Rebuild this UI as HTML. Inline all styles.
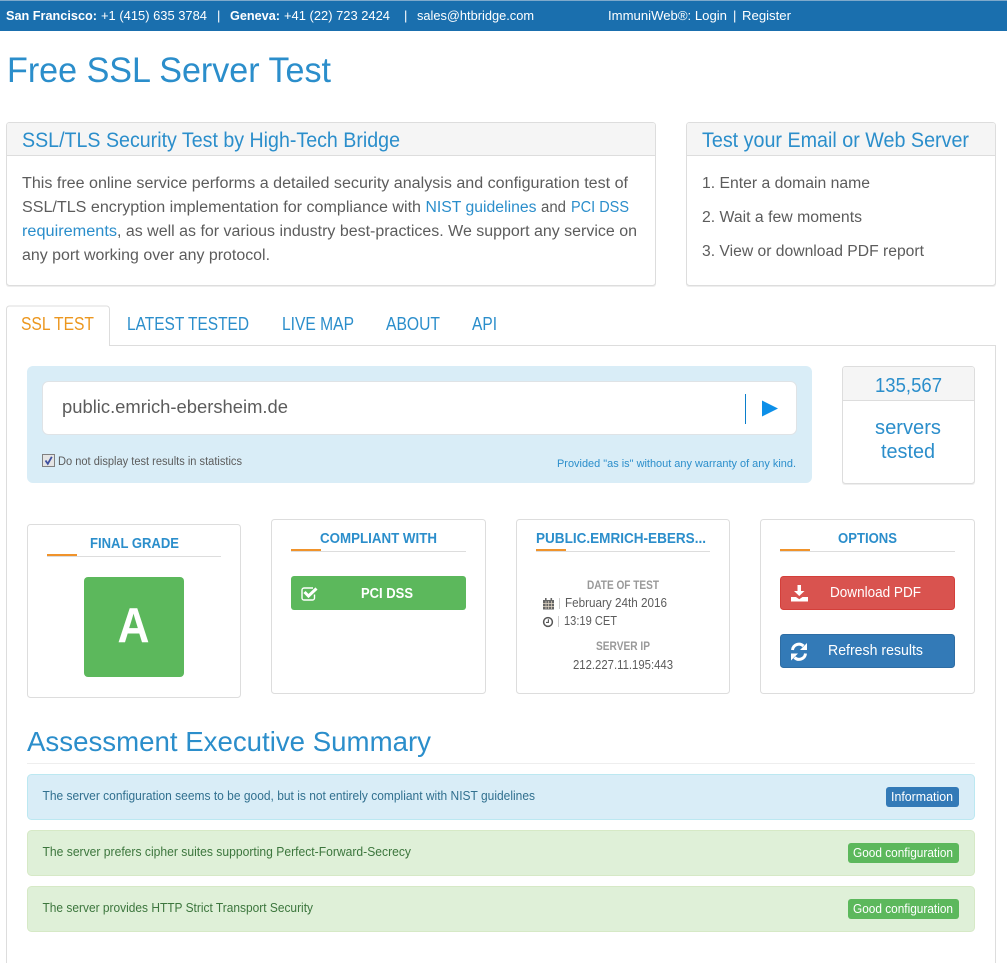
<!DOCTYPE html>
<html lang="en"><head><meta charset="utf-8"><title>Free SSL Server Test</title>
<style>
html,body{margin:0;padding:0;background:#fff;width:1007px;height:963px;overflow:hidden}
svg{display:block;position:absolute;left:0;top:0}
text{font-family:"Liberation Sans",sans-serif;white-space:pre}
.b{fill:#2b8ecb}.g{fill:#5c5c5c}.w{fill:#fff}.bd{font-weight:bold}
</style></head><body>
<svg width="1007" height="963" viewBox="0 0 1007 963" xmlns="http://www.w3.org/2000/svg">
<!-- top bar -->
<rect x="0" y="0" width="1007" height="1" fill="#7fa9cb"/>
<rect x="0" y="1" width="1007" height="30" fill="#1a6fae"/>
<g font-size="13">
<text x="6" y="20" class="w bd" textLength="91" lengthAdjust="spacingAndGlyphs">San Francisco:</text>
<text x="101" y="20" class="w" textLength="106" lengthAdjust="spacingAndGlyphs">+1 (415) 635 3784</text>
<text x="217" y="20" class="w">|</text>
<text x="230" y="20" class="w bd" textLength="50" lengthAdjust="spacingAndGlyphs">Geneva:</text>
<text x="284" y="20" class="w" textLength="106" lengthAdjust="spacingAndGlyphs">+41 (22) 723 2424</text>
<text x="404" y="20" class="w">|</text>
<text x="417" y="20" class="w" textLength="117" lengthAdjust="spacingAndGlyphs">sales@htbridge.com</text>
<text x="608" y="20" class="w" textLength="119" lengthAdjust="spacingAndGlyphs">ImmuniWeb®: Login</text>
<text x="733" y="20" class="w">|</text>
<text x="742" y="20" class="w" textLength="49" lengthAdjust="spacingAndGlyphs">Register</text>
</g>
<!-- title -->
<text x="7" y="82" class="b" font-size="35" textLength="324" lengthAdjust="spacingAndGlyphs">Free SSL Server Test</text>

<!-- left panel -->
<rect x="6" y="123" width="650" height="164" rx="3" fill="#eee"/>
<rect x="6.5" y="122.5" width="649" height="163" rx="3" fill="#fff" stroke="#ddd"/>
<path d="M7 155V125a2 2 0 0 1 2-2H653a2 2 0 0 1 2 2V155Z" fill="#f5f5f5"/>
<rect x="7" y="155" width="648" height="1" fill="#ddd"/>
<text x="22" y="147" class="b" font-size="21" textLength="378" lengthAdjust="spacingAndGlyphs">SSL/TLS Security Test by High-Tech Bridge</text>
<g font-size="15.5">
<text x="22" y="188" class="g" textLength="606" lengthAdjust="spacingAndGlyphs">This free online service performs a detailed security analysis and configuration test of</text>
<text x="22" y="212" class="g" textLength="399" lengthAdjust="spacingAndGlyphs">SSL/TLS encryption implementation for compliance with</text>
<text x="425.5" y="212" class="b" textLength="111" lengthAdjust="spacingAndGlyphs">NIST guidelines</text>
<text x="541" y="212" class="g" textLength="25" lengthAdjust="spacingAndGlyphs">and</text>
<text x="571" y="212" class="b" textLength="58" lengthAdjust="spacingAndGlyphs">PCI DSS</text>
<text x="22" y="236" class="b" textLength="95" lengthAdjust="spacingAndGlyphs">requirements</text>
<text x="117" y="236" class="g" textLength="520" lengthAdjust="spacingAndGlyphs">, as well as for various industry best-practices. We support any service on</text>
<text x="22" y="260" class="g" textLength="248" lengthAdjust="spacingAndGlyphs">any port working over any protocol.</text>
</g>

<!-- right panel -->
<rect x="686" y="123" width="310" height="164" rx="3" fill="#eee"/>
<rect x="686.5" y="122.5" width="309" height="163" rx="3" fill="#fff" stroke="#ddd"/>
<path d="M687 155V125a2 2 0 0 1 2-2H993a2 2 0 0 1 2 2V155Z" fill="#f5f5f5"/>
<rect x="687" y="155" width="308" height="1" fill="#ddd"/>
<text x="702" y="147" class="b" font-size="21" textLength="267" lengthAdjust="spacingAndGlyphs">Test your Email or Web Server</text>
<g font-size="15.5">
<text x="702" y="188" class="g" textLength="168" lengthAdjust="spacingAndGlyphs">1. Enter a domain name</text>
<text x="702" y="222" class="g" textLength="160" lengthAdjust="spacingAndGlyphs">2. Wait a few moments</text>
<text x="702" y="256" class="g" textLength="222" lengthAdjust="spacingAndGlyphs">3. View or download PDF report</text>
</g>

<!-- tab content frame -->
<path d="M6.5 963V345.5H995.5V963" fill="none" stroke="#ddd"/>
<path d="M6.5 346V309a3 3 0 0 1 3-3H106.5a3 3 0 0 1 3 3V346" fill="#fff" stroke="#ddd"/>
<rect x="7" y="344" width="102" height="3" fill="#fff"/>
<g font-size="18">
<text x="21" y="330" fill="#ec971f" textLength="73" lengthAdjust="spacingAndGlyphs">SSL TEST</text>
<text x="127" y="330" class="b" textLength="122" lengthAdjust="spacingAndGlyphs">LATEST TESTED</text>
<text x="282" y="330" class="b" textLength="72" lengthAdjust="spacingAndGlyphs">LIVE MAP</text>
<text x="386" y="330" class="b" textLength="54" lengthAdjust="spacingAndGlyphs">ABOUT</text>
<text x="472" y="330" class="b" textLength="25" lengthAdjust="spacingAndGlyphs">API</text>
</g>

<!-- search -->
<rect x="27" y="366" width="785" height="117" rx="6" fill="#d9edf7"/>
<rect x="42.5" y="381.5" width="754" height="53" rx="6" fill="#fff" stroke="#dfe3e6"/>
<text x="62" y="413" fill="#5c5c5c" font-size="18" textLength="226" lengthAdjust="spacingAndGlyphs">public.emrich-ebersheim.de</text>
<rect x="745" y="394" width="1" height="30" fill="#0b7ecb"/>
<path d="M762 400.500L778 408.500L762 416.500Z" fill="#0d8fe8"/>
<rect x="42.5" y="454.5" width="12" height="12" fill="#e4e4e4" stroke="#808080"/>
<path d="M45.500 460.500L47.800 463.800L51.800 456.800" fill="none" stroke="#3d4f9f" stroke-width="1.800"/>
<text x="58" y="465" fill="#5c5c5c" font-size="11.500" textLength="184" lengthAdjust="spacingAndGlyphs">Do not display test results in statistics</text>
<text x="557" y="467" class="b" font-size="11" textLength="239" lengthAdjust="spacingAndGlyphs">Provided "as is" without any warranty of any kind.</text>

<!-- stats -->
<rect x="842" y="367" width="133" height="118" rx="3" fill="#eee"/>
<rect x="842.5" y="366.5" width="132" height="117" rx="3" fill="#fff" stroke="#ddd"/>
<path d="M843 400V369a2 2 0 0 1 2-2H972a2 2 0 0 1 2 2V400Z" fill="#f5f5f5"/>
<rect x="843" y="400" width="131" height="1" fill="#ddd"/>
<text x="875" y="392" class="b" font-size="20" textLength="67" lengthAdjust="spacingAndGlyphs">135,567</text>
<text x="875" y="434" class="b" font-size="20" textLength="66" lengthAdjust="spacingAndGlyphs">servers</text>
<text x="881" y="458" class="b" font-size="20" textLength="54" lengthAdjust="spacingAndGlyphs">tested</text>

<!-- cards -->
<rect x="27.5" y="524.5" width="213" height="173" rx="3" fill="#fff" stroke="#ddd"/>
<rect x="271.5" y="519.5" width="214" height="174" rx="3" fill="#fff" stroke="#ddd"/>
<rect x="516.5" y="519.5" width="213" height="174" rx="3" fill="#fff" stroke="#ddd"/>
<rect x="760.5" y="519.5" width="214" height="174" rx="3" fill="#fff" stroke="#ddd"/>

<g font-size="14.500">
<text x="90" y="548" class="b bd" textLength="89" lengthAdjust="spacingAndGlyphs">FINAL GRADE</text>
<text x="320" y="543" class="b bd" textLength="117" lengthAdjust="spacingAndGlyphs">COMPLIANT WITH</text>
<text x="536" y="543" class="b bd" textLength="170" lengthAdjust="spacingAndGlyphs">PUBLIC.EMRICH-EBERS...</text>
<text x="838" y="543" class="b bd" textLength="59" lengthAdjust="spacingAndGlyphs">OPTIONS</text>
</g>
<rect x="47" y="556" width="174" height="1" fill="#ddd"/><rect x="47" y="554" width="30" height="2" fill="#f0932b"/>
<rect x="291" y="551" width="175" height="1" fill="#ddd"/><rect x="291" y="549" width="30" height="2" fill="#f0932b"/>
<rect x="536" y="551" width="174" height="1" fill="#ddd"/><rect x="536" y="549" width="30" height="2" fill="#f0932b"/>
<rect x="780" y="551" width="175" height="1" fill="#ddd"/><rect x="780" y="549" width="30" height="2" fill="#f0932b"/>

<!-- grade -->
<rect x="84" y="577" width="100" height="100" rx="4" fill="#5cb85c"/>
<text x="117.5" y="642" class="w bd" font-size="49" textLength="32" lengthAdjust="spacingAndGlyphs">A</text>

<!-- PCI -->
<rect x="291" y="576" width="175" height="34" rx="3" fill="#5cb85c"/>
<path d="M314.500 594.500V598a2 2 0 0 1-2 2H304a2 2 0 0 1-2-2V590a2 2 0 0 1 2-2H313" fill="none" stroke="#fff" stroke-width="1.400"/>
<path d="M304.500 592L308.500 596L316.500 588.500" fill="none" stroke="#fff" stroke-width="3"/>
<text x="361" y="598" class="w bd" font-size="14.500" textLength="52" lengthAdjust="spacingAndGlyphs">PCI DSS</text>

<!-- date -->
<text x="587" y="589" fill="#999" class="bd" font-size="11.500" textLength="72" lengthAdjust="spacingAndGlyphs">DATE OF TEST</text>
<path d="M543 600h11v9.500h-11Z" fill="#666"/>
<path d="M543 603.500h11M543 606.500h11M546 601v8M548.700 601v8M551.500 601v8" stroke="#e4d9c8" stroke-width=".7" fill="none"/>
<rect x="545" y="598" width="1.600" height="3" fill="#666"/><rect x="550.500" y="598" width="1.600" height="3" fill="#666"/>
<rect x="559" y="598" width="1" height="11" fill="#ccc"/>
<text x="565" y="607" class="g" font-size="13" textLength="102" lengthAdjust="spacingAndGlyphs">February 24th 2016</text>
<circle cx="548" cy="622" r="4.400" fill="none" stroke="#555" stroke-width="1.500"/>
<path d="M548.400 619.300V622.400H546" fill="none" stroke="#555" stroke-width="1.100"/>
<rect x="558" y="616" width="1" height="11" fill="#ccc"/>
<text x="564" y="625" class="g" font-size="13" textLength="53" lengthAdjust="spacingAndGlyphs">13:19 CET</text>
<text x="596" y="650" fill="#999" class="bd" font-size="11.500" textLength="54" lengthAdjust="spacingAndGlyphs">SERVER IP</text>
<text x="573" y="669" class="g" font-size="13" textLength="100" lengthAdjust="spacingAndGlyphs">212.227.11.195:443</text>

<!-- options -->
<rect x="780.500" y="576.500" width="174" height="33" rx="3" fill="#d9534f" stroke="#d43f3a"/>
<path d="M797.500 585h3.500v6h3.500l-5.250 5l-5.250-5h3.500Z" fill="#fff"/>
<path d="M791 597h5l3.250 2.200l3.250-2.200h5.500v4.500h-17Z" fill="#fff"/>
<text x="830" y="597" class="w" font-size="14.500" textLength="91" lengthAdjust="spacingAndGlyphs">Download PDF</text>
<rect x="780.500" y="634.500" width="174" height="33" rx="3" fill="#337ab7" stroke="#2e6da4"/>
<path d="M792.500 650a6.500 6.500 0 0 1 11-4" fill="none" stroke="#fff" stroke-width="3"/>
<path d="M807 643v7h-7Z" fill="#fff"/>
<path d="M805.500 653.500a6.500 6.500 0 0 1-11 4" fill="none" stroke="#fff" stroke-width="3"/>
<path d="M791 660.500v-7h7Z" fill="#fff"/>
<text x="828" y="655" class="w" font-size="14.500" textLength="95" lengthAdjust="spacingAndGlyphs">Refresh results</text>

<!-- summary -->
<text x="27" y="751" class="b" font-size="28" textLength="404" lengthAdjust="spacingAndGlyphs">Assessment Executive Summary</text>
<rect x="27" y="763" width="948" height="1" fill="#eee"/>

<rect x="27.500" y="774.500" width="947" height="45" rx="4" fill="#d9edf7" stroke="#bce8f1"/>
<text x="42.500" y="800" fill="#31708f" font-size="12.500" textLength="492.500" lengthAdjust="spacingAndGlyphs">The server configuration seems to be good, but is not entirely compliant with NIST guidelines</text>
<rect x="886" y="787" width="73" height="20" rx="3" fill="#337ab7"/>
<text x="891" y="801" class="w" font-size="12.500" textLength="62" lengthAdjust="spacingAndGlyphs">Information</text>

<rect x="27.500" y="830.500" width="947" height="45" rx="4" fill="#dff0d8" stroke="#d6e9c6"/>
<text x="42.500" y="856" fill="#3c763d" font-size="12.500" textLength="368.500" lengthAdjust="spacingAndGlyphs">The server prefers cipher suites supporting Perfect-Forward-Secrecy</text>
<rect x="848" y="843" width="111" height="20" rx="3" fill="#5cb85c"/>
<text x="853" y="857" class="w" font-size="12.500" textLength="100" lengthAdjust="spacingAndGlyphs">Good configuration</text>

<rect x="27.500" y="886.500" width="947" height="45" rx="4" fill="#dff0d8" stroke="#d6e9c6"/>
<text x="42.500" y="912" fill="#3c763d" font-size="12.500" textLength="270.500" lengthAdjust="spacingAndGlyphs">The server provides HTTP Strict Transport Security</text>
<rect x="848" y="899" width="111" height="20" rx="3" fill="#5cb85c"/>
<text x="853" y="913" class="w" font-size="12.500" textLength="100" lengthAdjust="spacingAndGlyphs">Good configuration</text>
</svg>
</body></html>
